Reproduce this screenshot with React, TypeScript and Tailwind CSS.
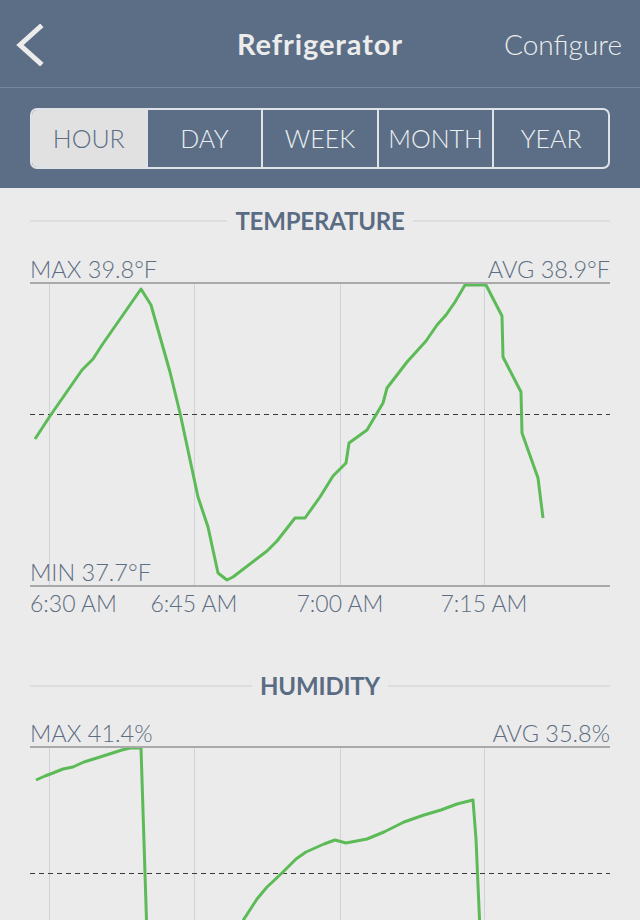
import React from "react";

const GREEN = "#5cbb57";

type P = [number, number];

const tempPts: P[] = [
  [35, 439], [50, 416], [82, 370], [93, 359], [102, 345], [141, 289], [151, 305],
  [170, 372], [180, 413], [198, 497], [208, 527], [218, 573], [227, 580], [233, 577],
  [267, 551], [277, 541], [295, 518], [305, 518], [320, 497], [333, 476], [346, 463],
  [349, 443], [367, 430], [383, 403], [387, 388], [407, 362], [426, 341], [437, 325],
  [446, 315], [455, 302], [465, 285], [486, 285], [502, 316], [503, 357], [521, 392],
  [522, 433], [538, 478], [543, 518],
];

const humPts: P[] = [
  [36, 781], [45, 777], [53, 774], [63, 770], [73, 768], [84, 763], [100, 758],
  [122, 751], [130, 749], [141, 749], [149, 1000],
];
const humPts2: P[] = [
  [232, 945], [244, 920], [257, 900], [267, 888], [282, 874], [296, 860], [306, 853],
  [324, 845], [335, 841], [346, 844], [367, 840], [384, 833], [404, 823], [424, 816],
  [441, 811], [457, 805], [473, 801], [476, 840], [483, 1000],
];

const gridX = [49, 194, 340, 484];

function Chart({
  top,
  dashY,
  lines,
  minLabel,
}: {
  top: number;
  dashY: number;
  lines: P[][];
  minLabel?: string;
}) {
  const toStr = (pts: P[]) => pts.map(([x, y]) => `${x - 30},${y - top}`).join(" ");
  return (
    <div className="relative h-[301px] box-content border-y-2 border-[#a9a9a9]">
      <svg width="580" height="301" className="block overflow-hidden">
        {gridX.map((x) => (
          <line key={x} x1={x - 30 + 0.5} x2={x - 30 + 0.5} y1={0} y2={301} stroke="#cfd2d6" strokeWidth={1} />
        ))}
        <line x1={0} x2={580} y1={dashY - top + 0.5} y2={dashY - top + 0.5} stroke="#3a3a3a" strokeWidth={1} strokeDasharray="5 4" />
        {lines.map((l, i) => (
          <polyline key={i} points={toStr(l)} fill="none" stroke={GREEN} strokeWidth={3} strokeLinejoin="round" />
        ))}
      </svg>
      {minLabel && (
        <span className="absolute left-0 bottom-0 text-[23.5px] leading-[26px] font-light text-[#5d6d82]">
          {minLabel}
        </span>
      )}
    </div>
  );
}

function SectionTitle({ title }: { title: string }) {
  return (
    <div className="flex items-center h-6 gap-2">
      <div className="flex-1 h-[2px] bg-[#dddddd]" />
      <span className="text-[24px] font-bold text-[#5a6c84] leading-6 tracking-[-0.2px]">{title}</span>
      <div className="flex-1 h-[2px] bg-[#dddddd]" />
    </div>
  );
}

function Labels({ left, right }: { left: string; right: string }) {
  return (
    <div className="flex justify-between h-[26px] text-[23.5px] leading-[26px] font-light text-[#5d6d82]">
      <span>{left}</span>
      <span>{right}</span>
    </div>
  );
}

export default function App() {
  const tabs = ["HOUR", "DAY", "WEEK", "MONTH", "YEAR"];
  const times: [string, number][] = [
    ["6:30 AM", 49],
    ["6:45 AM", 194],
    ["7:00 AM", 340],
    ["7:15 AM", 484],
  ];
  return (
    <div className="w-[640px] h-[920px] overflow-hidden bg-[#ebebeb] font-[Lato,'Noto_Sans',sans-serif]">
      <div className="bg-[#5b6e86] h-[188px]">
        <div className="relative flex items-center justify-center h-[88px] border-b border-[#7587a0]">
          <svg className="absolute left-[15px] top-[24px]" width="30" height="42" viewBox="0 0 30 42">
            <polyline points="25,3 5,21 25,39" fill="none" stroke="#ececec" strokeWidth={5} strokeLinecap="square" />
          </svg>
          <span className="text-[29px] font-bold text-[#ececec] tracking-[0.9px]">Refrigerator</span>
          <span className="absolute right-[18px] text-[28px] font-light text-[#ececec]">Configure</span>
        </div>
        <div className="px-[30px] pt-[20px]">
          <div className="flex h-[61px] rounded-[7px] border-2 border-[#dfe2e6] overflow-hidden">
            {tabs.map((t, i) => (
              <div
                key={t}
                className={
                  "flex-1 flex items-center justify-center text-[25px] font-light " +
                  (i === 0 ? "bg-[#e1e1e1] text-[#5b6e86]" : "text-[#eceef1] border-l-2 border-[#dfe2e6]")
                }
              >
                {t}
              </div>
            ))}
          </div>
        </div>
      </div>

      <div className="px-[30px]">
        <div className="pt-[21px]">
          <SectionTitle title="TEMPERATURE" />
        </div>
        <div className="mt-[23px]">
          <Labels left="MAX 39.8°F" right="AVG 38.9°F" />
        </div>
        <Chart top={284} dashY={414} lines={[tempPts]} minLabel="MIN 37.7°F" />
        <div className="relative h-[32px]">
          {times.map(([t, x], i) => (
            <span
              key={t}
              className="absolute top-0 text-[23px] leading-[32px] font-light text-[#5d6d82] whitespace-nowrap"
              style={i === 0 ? { left: 0 } : { left: x - 30, transform: "translateX(-50%)" }}
            >
              {t}
            </span>
          ))}
        </div>

        <div className="mt-[55px]">
          <SectionTitle title="HUMIDITY" />
        </div>
        <div className="mt-[22px]">
          <Labels left="MAX 41.4%" right="AVG 35.8%" />
        </div>
        <Chart top={749} dashY={874} lines={[humPts, humPts2]} />
      </div>
    </div>
  );
}
